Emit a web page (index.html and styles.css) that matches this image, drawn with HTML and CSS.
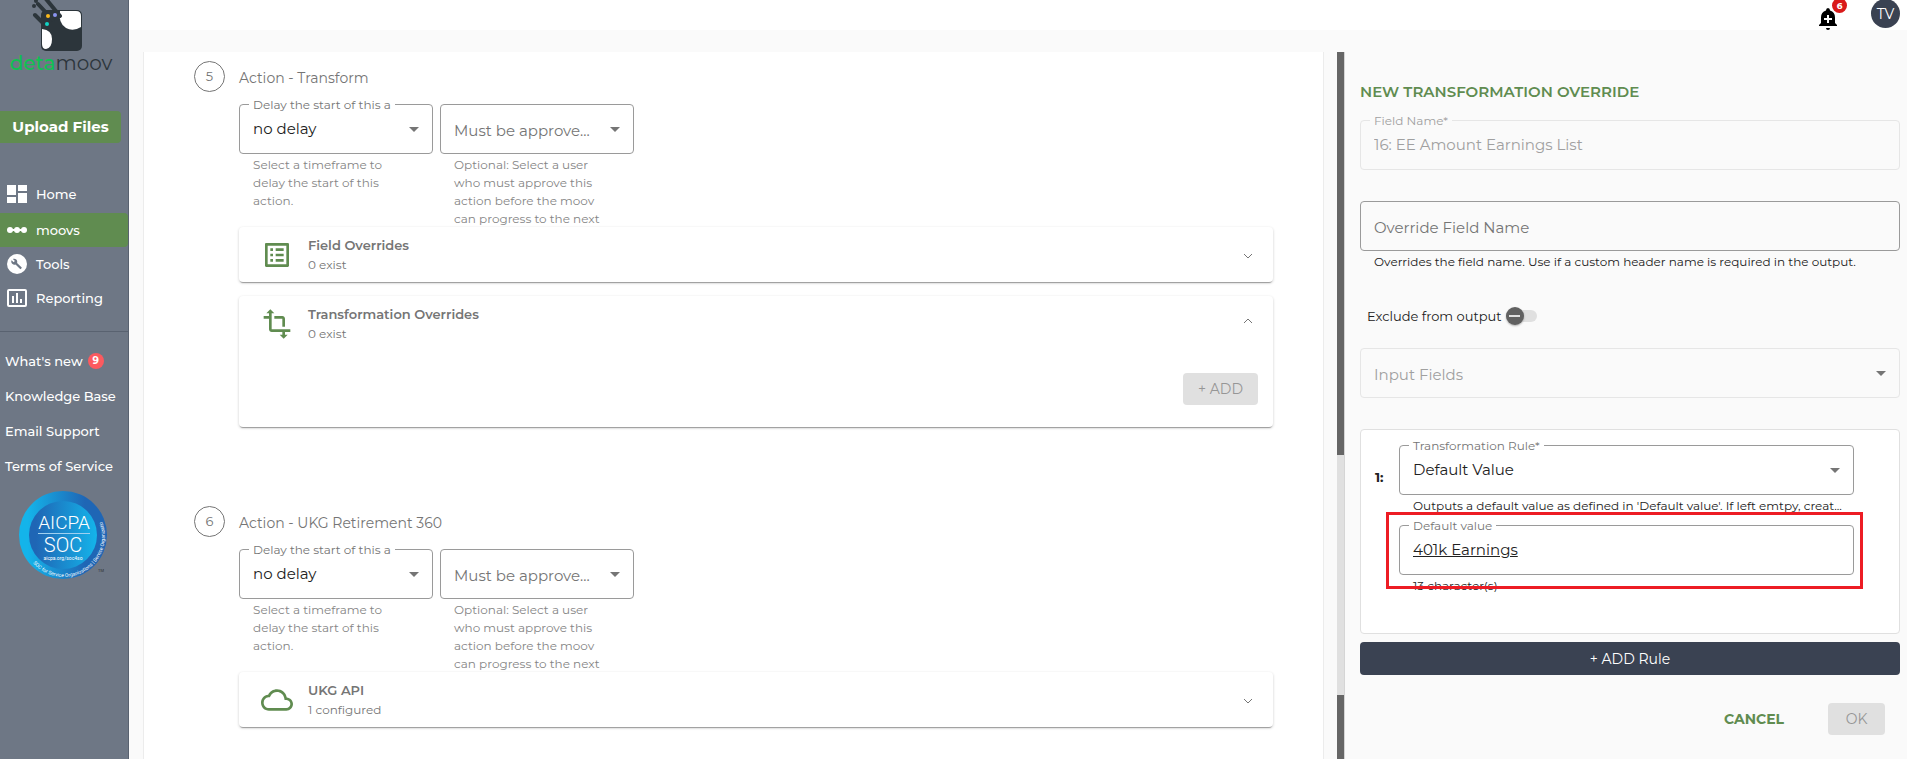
FILE: index.html
```html
<!DOCTYPE html>
<html lang="en">
<head>
    <meta charset="UTF-8">
    <meta name="viewport" content="width=device-width, initial-scale=1.0">
    <title>detamoov - moovs</title>
    <link rel="stylesheet" href="styles.css">
</head>
<body>
    <aside class="sidebar">
        <a href="#" class="logo">
            <svg width="54" height="52" viewBox="0 0 54 52">
                <rect x="13" y="10" width="41" height="41" rx="5" fill="#2c353b"/>
                <path d="M32 11h16q5 0 5 5v11q-8 5-15 1-8-5-6-17z" fill="#fff"/>
                <path d="M14 29q10 1 10 10t-6 10q-4 0-4-5z" fill="#fff"/>
                <g stroke="#2c353b" stroke-width="4" stroke-linecap="round">
                    <path d="M7 15l12 12M10 4l15 16M18-1l14 17"/>
                </g>
                <circle cx="6" cy="6" r="2" fill="#2c353b"/>
                <circle cx="8" cy="1" r="2" fill="#2c353b"/>
                <circle cx="19" cy="24" r="2" fill="#12d3c4"/>
                <circle cx="20" cy="16" r="2" fill="#fbb91b"/>
                <circle cx="27" cy="15" r="2" fill="#8b94f0"/>
            </svg>
            <span class="logo-text"><b>deta</b>moov</span>
        </a>
        <button class="upload">Upload Files</button>
        <nav class="nav">
            <a href="#">
                <svg viewBox="0 0 20 20"><path d="M0 1h9v10H0zM11 1h9v6h-9zM0 13h9v6H0zM11 9h9v10h-9z"/></svg>
                Home
            </a>
            <a href="#" class="active">
                <svg viewBox="0 0 20 20"><path d="M3 9h14v2H3z"/><circle cx="3" cy="10" r="3"/><circle cx="10" cy="10" r="3"/><circle cx="17" cy="10" r="3"/></svg>
                moovs
            </a>
            <a href="#">
                <svg viewBox="0 0 20 20"><circle cx="10" cy="10" r="10"/><path class="cut" d="M14.700 13.400l-4.600-4.500c.4-1.200.1-2.500-.8-3.300C8.300 4.700 7 4.500 5.900 5l2 2-1.300 1.300-2-2C4 7.400 4.200 8.800 5.200 9.700c.9.900 2.200 1.200 3.300.8l4.600 4.500c.2.200.5.200.7 0l.9-.9c.2-.2.2-.5 0-.7z"/></svg>
                Tools
            </a>
            <a href="#">
                <svg viewBox="0 0 20 20"><path fill-rule="evenodd" d="M2 1h16q2 0 2 2v14q0 2-2 2H2q-2 0-2-2V3q0-2 2-2zm0 2v14h16V3zM5 8h2v7H5zM9 5h2v10H9zM13 11h2v4h-2z"/></svg>
                Reporting
            </a>
        </nav>
        <div class="links">
            <a href="#">What's new <span class="count">9</span></a>
            <a href="#">Knowledge Base</a>
            <a href="#">Email Support</a>
            <a href="#">Terms of Service</a>
        </div>
        <svg class="soc" width="90" height="90" viewBox="0 0 90 90">
            <defs>
                <linearGradient id="ring"><stop offset="0.1" stop-color="#14b4ea"/><stop offset="0.75" stop-color="#1f66b5"/></linearGradient>
                <linearGradient id="disc"><stop offset="0.1" stop-color="#1f66b5"/><stop offset="1" stop-color="#14b4ea"/></linearGradient>
                <path id="arc" d="M14 72A41 41 0 0 0 83 30"/>
            </defs>
            <circle cx="44" cy="44" r="44" fill="url(#ring)"/>
            <circle cx="44" cy="44" r="34" fill="url(#disc)"/>
            <path d="M19 42.500h52" stroke="#9fd0f0"/>
            <g fill="#fff" text-anchor="middle">
                <text x="45" y="38" font-size="19" class="soc-name">AICPA</text>
                <text x="44" y="61" font-size="20" class="soc-name">SOC</text>
                <text x="44" y="69" font-size="5">aicpa.org/soc4so</text>
            </g>
            <text fill="#fff" font-size="5"><textPath href="#arc">SOC for Service Organizations | Service Organizations</textPath></text>
            <text x="79" y="81" font-size="4" fill="#333">TM</text>
        </svg>
    </aside>

    <div class="page">
        <header class="topbar">
            <button class="bell" aria-label="Notifications">
                <svg width="20" height="23" viewBox="0 0 20 23">
                    <path d="M10 0q2 0 2 2.500 5 1.500 5 7V15l2 2v1H1v-1l2-2V9.500q0-5.500 5-7Q8 0 10 0zM8 20h4q0 2-2 2t-2-2z"/>
                    <path d="M10 7v8M6 11h8" stroke="#fff" stroke-width="2"/>
                </svg>
                <span class="alerts">6</span>
            </button>
            <button class="avatar">TV</button>
        </header>

        <div class="content">
            <main class="steps">
                <section class="step">
                    <div class="step-title"><span class="num">5</span><h2>Action - Transform</h2></div>
                    <div class="step-body">
                        <div class="options">
                            <div class="option">
                                <div class="field">
                                    <label for="delay5">Delay the start of this a</label>
                                    <select id="delay5"><option>no delay</option></select>
                                </div>
                                <p class="hint">Select a timeframe to delay the start of this action.</p>
                            </div>
                            <div class="option">
                                <div class="field">
                                    <select id="approve5" class="empty" aria-label="Must be approved"><option>Must be approve...</option></select>
                                </div>
                                <p class="hint">Optional: Select a user who must approve this action before the moov can progress to the next</p>
                            </div>
                        </div>
                        <div class="panel">
                            <div class="panel-head">
                                <svg width="32" height="32" viewBox="0 0 24 24"><path d="M11 7h6v2h-6zm0 4h6v2h-6zm0 4h6v2h-6zM7 7h2v2H7zm0 4h2v2H7zm0 4h2v2H7zM20.100 3H3.900c-.5 0-.9.4-.9.9v16.200c0 .4.4.9.9.9h16.200c.4 0 .9-.5.9-.9V3.900c0-.5-.5-.9-.9-.9zM19 19H5V5h14v14z"/></svg>
                                <div><h3>Field Overrides</h3><p>0 exist</p></div>
                                <button class="toggle" aria-label="Expand"><svg width="10" height="6" viewBox="0 0 10 6"><path d="M1 1l4 4 4-4"/></svg></button>
                            </div>
                        </div>
                        <div class="panel">
                            <div class="panel-head">
                                <svg width="32" height="32" viewBox="0 0 24 24"><path d="M22 18v-2H8V4h2L7 1 4 4h2v2H2v2h4v8c0 1.100.9 2 2 2h8v2h-2l3 3 3-3h-2v-2h4zM10 8h6v6h2V8c0-1.100-.9-2-2-2h-6v2z"/></svg>
                                <div><h3>Transformation Overrides</h3><p>0 exist</p></div>
                                <button class="toggle" aria-label="Collapse"><svg width="10" height="10" viewBox="0 0 10 10"><path d="M1 5l4-4 4 4"/></svg></button>
                            </div>
                            <div class="panel-body"><button class="btn" disabled>+ ADD</button></div>
                        </div>
                    </div>
                </section>

                <section class="step">
                    <div class="step-title"><span class="num">6</span><h2>Action - UKG Retirement 360</h2></div>
                    <div class="step-body">
                        <div class="options">
                            <div class="option">
                                <div class="field">
                                    <label for="delay6">Delay the start of this a</label>
                                    <select id="delay6"><option>no delay</option></select>
                                </div>
                                <p class="hint">Select a timeframe to delay the start of this action.</p>
                            </div>
                            <div class="option">
                                <div class="field">
                                    <select id="approve6" class="empty" aria-label="Must be approved"><option>Must be approve...</option></select>
                                </div>
                                <p class="hint">Optional: Select a user who must approve this action before the moov can progress to the next</p>
                            </div>
                        </div>
                        <div class="panel">
                            <div class="panel-head">
                                <svg width="32" height="32" viewBox="0 0 24 24"><path d="M19.350 10.040C18.670 6.590 15.640 4 12 4 9.110 4 6.600 5.640 5.350 8.040 2.340 8.360 0 10.910 0 14c0 3.310 2.690 6 6 6h13c2.760 0 5-2.240 5-5 0-2.640-2.050-4.780-4.650-4.960zM19 18H6c-2.210 0-4-1.790-4-4 0-2.050 1.530-3.760 3.560-3.970l1.070-.11.5-.95C8.080 7.140 9.940 6 12 6c2.620 0 4.880 1.860 5.390 4.430l.3 1.500 1.530.11c1.560.1 2.780 1.410 2.780 2.960 0 1.650-1.350 3-3 3z"/></svg>
                                <div><h3>UKG API</h3><p>1 configured</p></div>
                                <button class="toggle" aria-label="Expand"><svg width="10" height="6" viewBox="0 0 10 6"><path d="M1 1l4 4 4-4"/></svg></button>
                            </div>
                        </div>
                    </div>
                </section>
            </main>

            <div class="scrollbar"><div class="thumb"></div></div>

            <form class="drawer">
                <h1>New Transformation Override</h1>
                <div class="field disabled">
                    <label for="fieldName">Field Name*</label>
                    <input type="text" id="fieldName" value="16: EE Amount Earnings List" disabled>
                </div>
                <div class="field spaced">
                    <input type="text" id="overrideName" class="empty" placeholder="Override Field Name" aria-label="Override Field Name">
                </div>
                <p class="hint">Overrides the field name. Use if a custom header name is required in the output.</p>
                <div class="exclude">
                    <label for="exclude">Exclude from output</label>
                    <input type="checkbox" id="exclude" class="switch">
                </div>
                <div class="field disabled">
                    <select id="inputFields" class="empty" aria-label="Input Fields" disabled><option>Input Fields</option></select>
                </div>

                <div class="rule">
                    <b>1:</b>
                    <div class="rule-fields">
                        <div class="field">
                            <label for="ruleType">Transformation Rule*</label>
                            <select id="ruleType"><option>Default Value</option></select>
                        </div>
                        <p class="hint">Outputs a default value as defined in 'Default value'. If left emtpy, creat...</p>
                        <div class="marked">
                            <div class="field">
                                <label for="defaultValue">Default value</label>
                                <input type="text" id="defaultValue" class="underlined" value="401k Earnings">
                            </div>
                            <p class="hint">13 character(s)</p>
                        </div>
                    </div>
                </div>

                <button type="button" class="add-rule">+ ADD Rule</button>
                <div class="actions">
                    <button type="button" class="cancel">CANCEL</button>
                    <button type="submit" class="btn" disabled>OK</button>
                </div>
            </form>
        </div>
    </div>
</body>
</html>
```
FILE: styles.css
```css
* {
    box-sizing: border-box;
}

body {
    margin: 0;
    display: flex;
    height: 100vh;
    overflow: hidden;
    background: #fafafa;
    color: #212121;
    font-family: Montserrat, Inter, sans-serif;
    font-size: 14px;
}

h1, h2, h3, p {
    margin: 0;
}

a {
    color: inherit;
    text-decoration: none;
}

button, input, select {
    font: inherit;
    color: inherit;
}

button {
    border: none;
    background: none;
    padding: 0;
    cursor: pointer;
}

/* sidebar */
.sidebar {
    flex: 0 0 129px;
    background: #6e7785;
    border-right: 1px solid #596270;
    color: #fff;
    font-size: 13px;
    font-weight: 500;
}

.logo {
    display: block;
    height: 71px;
    text-align: center;
}

.logo svg {
    display: block;
    margin-left: 28px;
    overflow: visible;
}

.logo-text {
    display: block;
    margin-top: -2px;
    padding-right: 6px;
    font-size: 20px;
    line-height: 26px;
    font-weight: 400;
    color: #2c353b;
}

.logo-text b {
    font-weight: 500;
    color: #10c152;
}

.upload {
    display: block;
    width: 121px;
    height: 32px;
    margin: 40px 0 34px;
    padding-bottom: 2px;
    background: #608c50;
    border-radius: 0 4px 4px 0;
    font-size: 15px;
    font-weight: 700;
}

.nav {
    padding-bottom: 16px;
    border-bottom: 1px solid #596270;
}

.nav a {
    display: flex;
    align-items: center;
    gap: 9px;
    height: 34px;
    padding-left: 7px;
}

.nav .active {
    margin-top: 2px;
    background: #608c50;
    border-radius: 0 4px 4px 0;
}

.nav svg {
    width: 20px;
    height: 20px;
    fill: #fff;
}

.nav .cut {
    fill: #6e7785;
}

.links {
    margin-top: 11px;
    padding-left: 5px;
}

.links a {
    display: flex;
    align-items: center;
    gap: 5px;
    height: 35px;
}

.count {
    width: 16px;
    height: 16px;
    border-radius: 50%;
    background: #fc5a5f;
    font-size: 10px;
    line-height: 16px;
    font-weight: 700;
    text-align: center;
}

.soc {
    display: block;
    margin: 8px 0 0 19px;
    overflow: visible;
    font-family: Roboto, sans-serif;
    font-weight: 400;
}

.soc-name {
    font-weight: 300;
}

/* top bar */
.page {
    flex: 1;
    min-width: 0;
    display: flex;
    flex-direction: column;
}

.topbar {
    display: flex;
    justify-content: flex-end;
    flex: 0 0 30px;
    gap: 33px;
    padding-right: 7px;
    background: #fff;
}

.bell {
    position: relative;
    height: 30px;
    padding-top: 8px;
}

.bell svg {
    display: block;
}

.alerts {
    position: absolute;
    top: -2px;
    right: -9px;
    width: 15px;
    height: 15px;
    border-radius: 50%;
    background: #d91a1a;
    color: #fff;
    font-size: 9px;
    line-height: 15px;
    font-weight: 700;
}

.avatar {
    width: 29px;
    height: 29px;
    margin-top: -1px;
    border-radius: 50%;
    background: #3a4252;
    color: #fff;
}

.content {
    flex: 1;
    min-height: 0;
    display: flex;
    padding: 22px 0 0 14px;
}

/* moov steps */
.steps {
    flex: 1;
    min-width: 0;
    margin-right: 13px;
    padding: 9px 50px 0;
    overflow: hidden;
    background: #fff;
    border: solid #ececec;
    border-width: 0 1px;
    color: #757575;
}

.step {
    margin-bottom: 79px;
}

.step-title {
    display: flex;
    align-items: center;
    gap: 14px;
}

.num {
    width: 31px;
    height: 31px;
    border: 1px solid #757575;
    border-radius: 50%;
    font-size: 13px;
    line-height: 29px;
    text-align: center;
}

.step-title h2 {
    padding-top: 2px;
    font-size: 14px;
    font-weight: 400;
}

.step-body {
    margin: 12px 0 0 45px;
}

.options {
    display: flex;
    gap: 7px;
}

.option {
    width: 194px;
}

.option .field {
    color: #212121;
}

.option .hint {
    height: 71px;
    padding-right: 26px;
    color: #858585;
}

.option:first-child .hint {
    padding-right: 50px;
}

.field {
    position: relative;
    height: 50px;
    border: 1px solid #9a9a9a;
    border-radius: 4px;
}

.field label {
    position: absolute;
    top: -8px;
    left: 9px;
    padding: 0 4px;
    background: #fff;
    color: #757575;
    font-size: 12px;
    line-height: 16px;
    white-space: nowrap;
}

.field input, .field select {
    display: block;
    width: 100%;
    height: 48px;
    padding: 0 13px 2px;
    border: none;
    outline: none;
    background: none;
    appearance: none;
    font-size: 15px;
}

.field .empty {
    padding: 3px 13px 0;
    color: #757575;
}

.empty::placeholder {
    color: #757575;
}

/* drop-down arrow */
.field:has(select)::after {
    content: "";
    position: absolute;
    top: 22px;
    right: 13px;
    border: 5px solid transparent;
    border-top-color: #757575;
    border-bottom: none;
}

.hint {
    margin-top: 2px;
    padding-left: 14px;
    font-size: 12px;
    line-height: 18px;
}

.panel {
    position: relative;
    margin-bottom: 14px;
    background: #fff;
    border-radius: 4px;
    box-shadow: 0 2px 1px -1px rgba(0, 0, 0, 0.3), 0 1px 3px rgba(0, 0, 0, 0.2);
}

.panel-head {
    display: flex;
    align-items: center;
    height: 55px;
    padding: 0 20px 0 22px;
    line-height: 19px;
}

.panel-head > svg {
    margin-right: 15px;
    fill: #608c50;
}

.panel-head h3 {
    font-size: 13px;
    font-weight: 600;
}

.panel-head p {
    font-size: 12px;
}

.toggle {
    margin-left: auto;
}

.toggle path {
    fill: none;
    stroke: #757575;
}

.panel-body {
    padding: 22px 15px;
    text-align: right;
}

.btn {
    height: 32px;
    padding: 0 15px;
    border-radius: 4px;
    background: #e0e0e0;
    color: #969696;
}

/* scroll position of the steps */
.scrollbar {
    flex: 0 0 8px;
    background: #666;
    border-right: 1px solid #d5d5d5;
    display: grid;
    grid-template-rows: 57% 34% auto;
}

.thumb {
    grid-row: 2;
    background: #e0e0e0;
}

/* override form */
.drawer {
    flex: 0 0 562px;
    padding: 30px 7px 0 15px;
}

.drawer h1 {
    margin-bottom: 18px;
    color: #608c50;
    font-size: 15px;
    line-height: 20px;
    font-weight: 600;
    text-transform: uppercase;
}

.spaced {
    margin-top: 31px;
}

.field.disabled {
    border-color: #e6e6e6;
}

.disabled label {
    background: #fafafa;
}

.disabled label, .disabled input, .disabled select, .disabled .empty {
    color: #a0a0a0;
    opacity: 1;
}

.exclude {
    display: flex;
    align-items: center;
    gap: 4px;
    height: 20px;
    margin: 35px 0 22px 7px;
    font-size: 13px;
}

.switch {
    position: relative;
    appearance: none;
    width: 31px;
    height: 12px;
    margin: 0;
    border-radius: 6px;
    background: #e0e0e0;
}

.switch::before {
    content: "";
    position: absolute;
    top: -3px;
    left: 0;
    width: 18px;
    height: 18px;
    border-radius: 50%;
    background: linear-gradient(#e0e0e0, #e0e0e0) center / 11px 2px no-repeat #616161;
    box-shadow: 0 1px 2px rgba(0, 0, 0, 0.3);
}

.rule {
    display: flex;
    margin: 31px 0 8px;
    min-height: 205px;
    padding: 15px 45px 0 14px;
    background: #fff;
    border: 1px solid #e0e0e0;
    border-radius: 4px;
}

.rule b {
    width: 24px;
    margin-top: 24px;
    font-size: 13px;
}

.rule-fields {
    flex: 1;
    min-width: 0;
}

.marked {
    position: relative;
    margin-top: 10px;
}

.marked::after {
    content: "";
    position: absolute;
    inset: -13px -9px 6px -13px;
    border: 3px solid #ed1c24;
    pointer-events: none;
}

.field .underlined {
    text-decoration: underline;
}

.add-rule {
    display: block;
    width: 100%;
    height: 33px;
    border-radius: 4px;
    background: #3a4252;
    color: #fff;
}

.actions {
    display: flex;
    justify-content: flex-end;
    gap: 44px;
    margin: 28px 15px 0 0;
}

.cancel {
    color: #608c50;
    font-weight: 700;
}

.actions .btn {
    width: 57px;
}
```
